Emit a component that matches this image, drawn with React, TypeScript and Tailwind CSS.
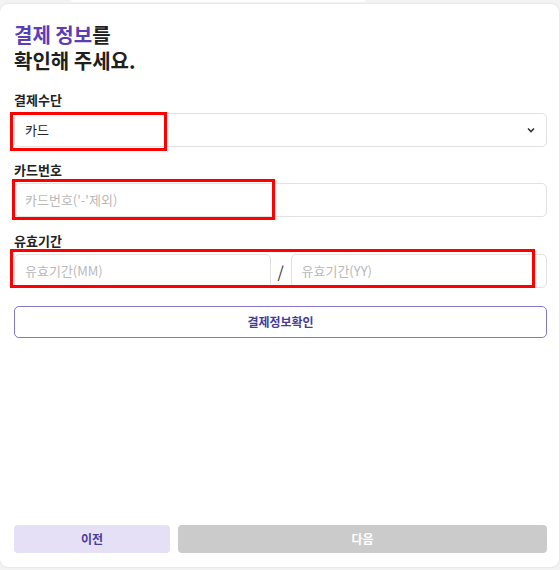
import React from "react";

function Label({ children }: { children: React.ReactNode }) {
  return <div className="mb-[4px] h-[18px] text-[13px] font-semibold leading-[18px] text-[#222]">{children}</div>;
}

function Field({ placeholder }: { placeholder: string }) {
  return (
    <div className="flex h-[34px] flex-1 items-center rounded-[5px] border border-[#e2e2e2] bg-white px-[10px] text-[13px] leading-[18px] text-[#b9b9b9]">
      {placeholder}
    </div>
  );
}

export default function App() {
  return (
    <div
      className="relative h-[570px] w-[560px] overflow-hidden bg-[#f3f3f3]"
      style={{ fontFamily: '"Noto Sans CJK KR", "Noto Sans", sans-serif' }}
    >
      <div className="absolute left-[70px] top-[-6px] h-[8px] w-[296px] rounded-[6px] bg-white" />
      <div className="relative mt-[4px] flex h-[563px] w-[559px] flex-col rounded-[8px] bg-white pl-[14px] pr-[12px] pt-[18px] pb-[14px] shadow-[0_0_2px_rgba(0,0,0,0.15)]">
        <h1 className="text-[20px] font-bold text-[#1f1f1f]">
          <div className="h-[26px] leading-[26px]">
            <span className="text-[#5b3db5]">결제 정보</span>를
          </div>
          <div className="h-[26px] leading-[26px]">확인해 주세요.</div>
        </h1>

        <div className="mt-[17px]">
          <Label>결제수단</Label>
          <div className="flex h-[34px] items-center justify-between rounded-[5px] border border-[#e2e2e2] bg-white px-[10px] text-[13px] leading-[18px] text-[#222]">
            <span>카드</span>
            <svg width="10" height="10" viewBox="0 0 10 10" fill="none" stroke="#333" strokeWidth="1.6">
              <path d="M2 3.5l3 3 3-3" />
            </svg>
          </div>
        </div>

        <div className="mt-[14px]">
          <Label>카드번호</Label>
          <div className="flex">
            <Field placeholder="카드번호('-'제외)" />
          </div>
        </div>

        <div className="mt-[15px]">
          <Label>유효기간</Label>
          <div className="flex items-center gap-[7px]">
            <Field placeholder="유효기간(MM)" />
            <span className="w-[6px] text-center text-[16px] leading-[20px] text-[#333]">/</span>
            <Field placeholder="유효기간(YY)" />
          </div>
        </div>

        <button className="mt-[18px] h-[32px] rounded-[5px] border border-[#8577c4] bg-white text-[12px] font-semibold leading-[16px] text-[#4a3b98]">
          결제정보확인
        </button>

        <div className="mt-auto flex gap-[8px]">
          <button className="h-[28px] w-[156px] rounded-[4px] bg-[#e5e0f5] text-[12px] font-semibold leading-[16px] text-[#4a3b98]">
            이전
          </button>
          <button className="h-[28px] flex-1 rounded-[4px] bg-[#cbcbcb] text-[12px] font-semibold leading-[16px] text-white">
            다음
          </button>
        </div>
      </div>

      <div className="pointer-events-none absolute left-[10px] top-[112px] h-[39px] w-[157px] border-[3px] border-[#ff0000]" />
      <div className="pointer-events-none absolute left-[12px] top-[179px] h-[41px] w-[263px] border-[3px] border-[#ff0000]" />
      <div className="pointer-events-none absolute left-[10px] top-[249px] h-[39px] w-[525px] border-[3px] border-[#ff0000]" />
    </div>
  );
}
